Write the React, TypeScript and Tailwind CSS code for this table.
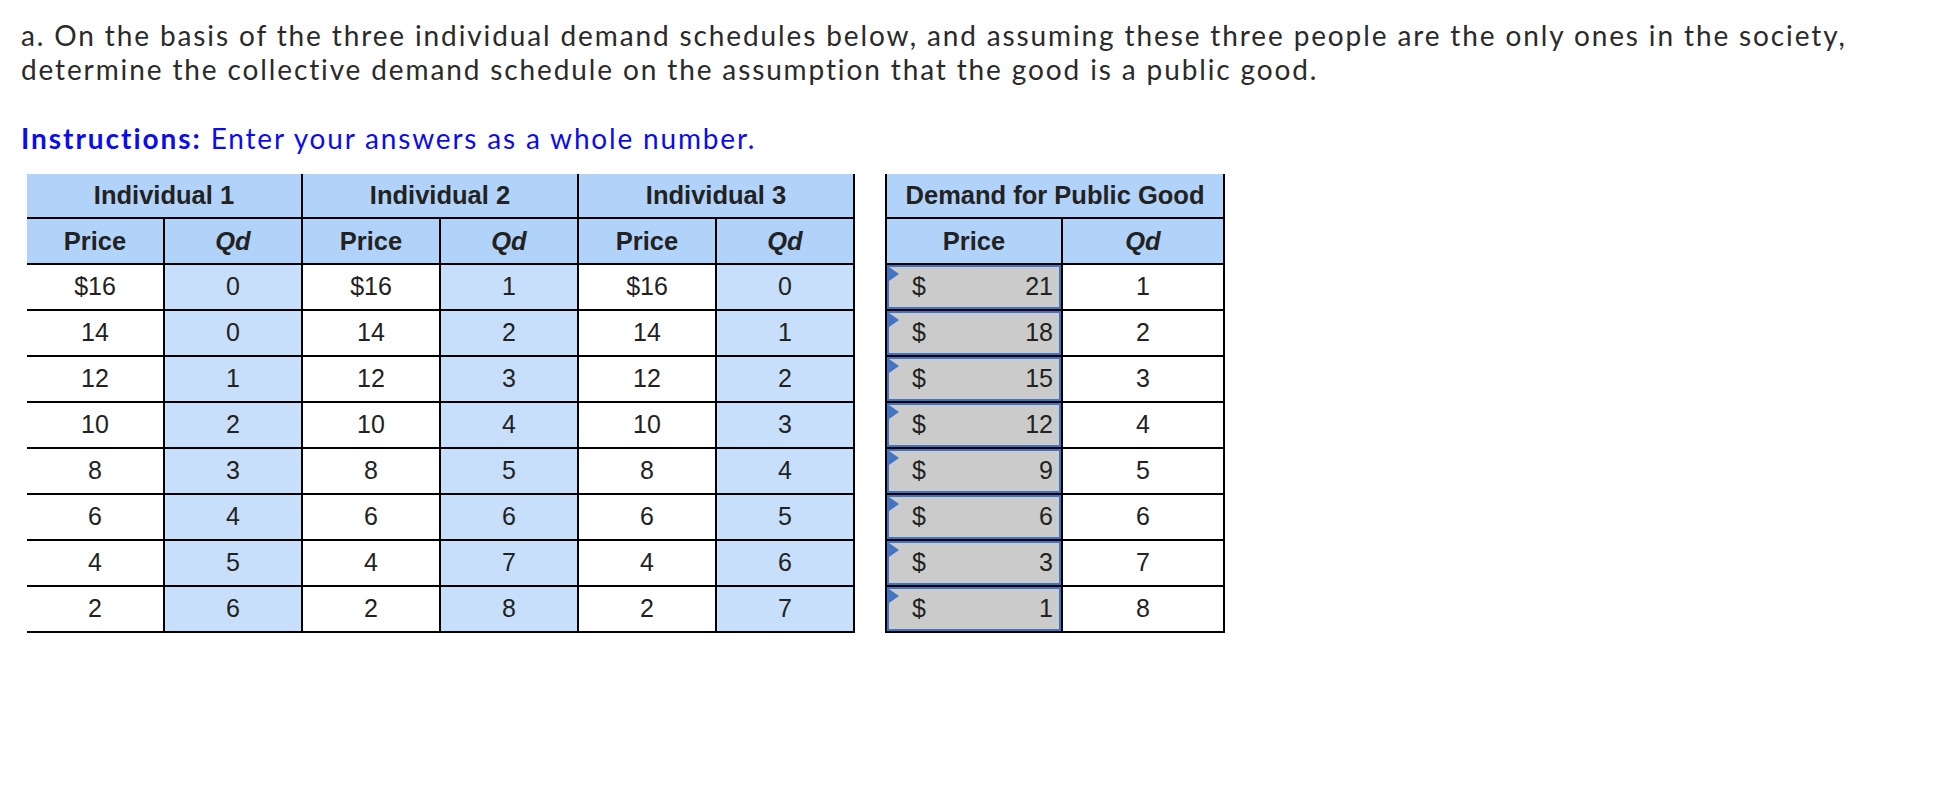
import React from "react";

const ROWS: [string, string, string, string, string, string][] = [
  ["$16", "0", "$16", "1", "$16", "0"],
  ["14", "0", "14", "2", "14", "1"],
  ["12", "1", "12", "3", "12", "2"],
  ["10", "2", "10", "4", "10", "3"],
  ["8", "3", "8", "5", "8", "4"],
  ["6", "4", "6", "6", "6", "5"],
  ["4", "5", "4", "7", "4", "6"],
  ["2", "6", "2", "8", "2", "7"],
];

const PUBLIC: [string, string][] = [
  ["21", "1"],
  ["18", "2"],
  ["15", "3"],
  ["12", "4"],
  ["9", "5"],
  ["6", "6"],
  ["3", "7"],
  ["1", "8"],
];

const cell = "flex items-center justify-center border-r-2 border-b-2 border-black";
const head = cell + " bg-[#b1d2f9] font-bold text-[25.5px]";

export default function App() {
  return (
    <div className="min-h-screen bg-white px-[21px] pt-[18px] text-[#2a2a2a]">
      <p className="font-['Lato','Open_Sans',sans-serif] text-[28px] leading-[34px] tracking-[0.067em] whitespace-nowrap">
        a. On the basis of the three individual demand schedules below, and assuming these three people are the only ones in the society,
        <br />
        determine the collective demand schedule on the assumption that the good is a public good.
      </p>
      <p className="mt-[35px] font-['Lato','Open_Sans',sans-serif] text-[28px] leading-[34px] tracking-[0.065em] text-[#0b0bef]">
        <span className="font-bold tracking-[0.07em]">Instructions:</span> Enter your answers as a whole number.
      </p>

      <div className="mt-[19px] ml-[6px] flex gap-[30px] font-['Liberation_Sans',Arial,sans-serif] text-[25px] text-[#222]">
        {/* individual schedules */}
        <div className="grid grid-cols-[repeat(6,138px)] grid-rows-[45px_46px_repeat(8,46px)]">
          {["Individual 1", "Individual 2", "Individual 3"].map((t) => (
            <div key={t} className={head + " col-span-2"}>
              {t}
            </div>
          ))}
          {[0, 1, 2].map((i) => (
            <React.Fragment key={i}>
              <div className={head}>Price</div>
              <div className={head + " italic"}>Qd</div>
            </React.Fragment>
          ))}
          {ROWS.map((r, ri) =>
            r.map((v, ci) => (
              <div key={ri + "-" + ci} className={cell + (ci % 2 === 1 ? " bg-[#c7dffb]" : " bg-white")}>
                {v}
              </div>
            ))
          )}
        </div>

        {/* collective demand */}
        <div className="grid grid-cols-[176px_162px] grid-rows-[45px_46px_repeat(8,46px)] border-l-2 border-black">
          <div className={head + " col-span-2"}>Demand for Public Good</div>
          <div className={head}>Price</div>
          <div className={head + " italic"}>Qd</div>
          {PUBLIC.map(([p, q]) => (
            <React.Fragment key={p}>
              <div className="border-r-2 border-b-2 border-black">
                <div className="relative flex h-full items-center justify-between border-2 border-[#4374c1] bg-[#cbcbcb] pl-[23px] pr-[6px]">
                  <span className="absolute left-0 top-0 h-0 w-0 border-t-[7px] border-b-[7px] border-l-[10px] border-t-transparent border-b-transparent border-l-[#4374c1]" />
                  <span>$</span>
                  <span>{p}</span>
                </div>
              </div>
              <div className={cell + " bg-white"}>{q}</div>
            </React.Fragment>
          ))}
        </div>
      </div>
    </div>
  );
}
